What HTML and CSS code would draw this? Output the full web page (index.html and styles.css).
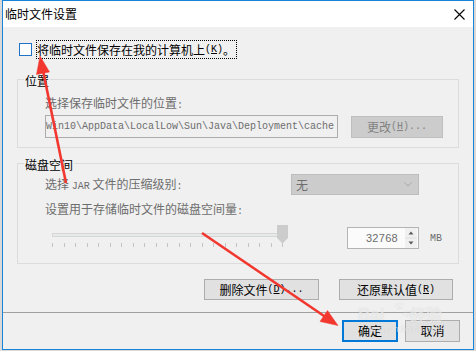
FILE: index.html
```html
<!DOCTYPE html>
<html lang="zh-CN">
<head>
<meta charset="utf-8">
<title>临时文件设置</title>
<link rel="stylesheet" href="styles.css">
</head>
<body>
<div class="win">
  <div class="titlebar">
    <span class="title">临时文件设置</span>
    <svg class="close" width="11" height="11" viewBox="0 0 11 11"><path d="M0.5 0.5L10.5 10.5M10.5 0.5L0.5 10.5" stroke="#000" stroke-width="1.1" fill="none"/></svg>
  </div>
  <div class="content">
    <div class="check-row">
      <span class="checkbox"></span>
      <span class="check-label">将临时文件保存在我的计算机上<span class="m">(<u>K</u>)</span>。</span>
    </div>

    <div class="group g1">
      <div class="legend">位置</div>
      <div class="label dis">选择保存临时文件的位置<span class="m">:</span></div>
      <div class="path-row">
        <div class="path"><span>Win10\AppData\LocalLow\Sun\Java\Deployment\cache</span></div>
        <div class="btn disabled">更改<span class="m">(<u>H</u>)...</span></div>
      </div>
    </div>

    <div class="group g2">
      <div class="legend">磁盘空间</div>
      <div class="combo-row">
        <span class="label-inline dis">选择 <span class="m">JAR</span> 文件的压缩级别<span class="m">:</span></span>
        <div class="combo">
          <span>无</span>
          <svg width="8" height="5" viewBox="0 0 8 5"><path d="M0.5 0.5L4 4L7.5 0.5" stroke="#a9a9a9" fill="none"/></svg>
        </div>
      </div>
      <div class="label dis l2">设置用于存储临时文件的磁盘空间量<span class="m">:</span></div>
      <div class="slider-row">
        <svg class="slider" width="237" height="23" viewBox="0 0 237 23">
          <rect x="0.5" y="8.5" width="232" height="3" fill="#e7eaea" stroke="#d6d6d6"/>
          <path d="M0.5 18V22M12.5 18V22M23.5 18V22M35.5 18V22M46.5 18V22M58.5 18V22M69.5 18V22M81.5 18V22M92.5 18V22M104.5 18V22M115.5 18V22M127.5 18V22M138.5 18V22M150.5 18V22M161.5 18V22M173.5 18V22M184.5 18V22M196.5 18V22M207.5 18V22M219.5 18V22M230.5 18V22" stroke="#c4c4c4" stroke-width="1"/>
          <path d="M225 0H236V13L230.5 18.5L225 13Z" fill="#cccccc"/>
        </svg>
        <div class="spin">
          <span class="spin-val">32768</span>
          <svg class="spin-btns" width="12" height="20" viewBox="0 0 12 20">
            <rect x="0" y="0" width="12" height="9.5" fill="#f0f0f0"/>
            <rect x="0" y="10.5" width="12" height="9.5" fill="#f0f0f0"/>
            <path d="M0 10H12" stroke="#d9d9d9"/>
            <path d="M3.5 6.5H8.5L6 3.5Z" fill="#5a5a5a"/>
            <path d="M3.5 13.5H8.5L6 16.5Z" fill="#5a5a5a"/>
          </svg>
        </div>
        <span class="mb">MB</span>
      </div>
    </div>

    <div class="btn-row">
      <div class="btn b-del">删除文件<span class="m">(<u>D</u>)...</span></div>
      <div class="btn b-reset">还原默认值<span class="m">(<u>R</u>)</span></div>
    </div>

    <div class="sep"></div>

    <div class="ok-row">
      <div class="btn b-ok">确定</div>
      <div class="btn b-cancel">取消</div>
    </div>
  </div>
</div>

<div class="watermark"><span class="wm-bai">Bai</span><span class="wm-paw">&#x1F43E;</span><span class="wm-jy">经验</span><span class="wm-url">jingyan.baidu.com</span></div>

<svg class="arrows" width="476" height="351" viewBox="0 0 476 351">
  <g fill="#f2372f" stroke="#f2372f">
    <path d="M66 183L42.5 68" stroke-width="2.6" fill="none"/>
    <path d="M40 56L49.5 72L36.5 74.5Z" stroke-width="0.5"/>
    <path d="M202 233L327 318" stroke-width="2.6" fill="none"/>
    <path d="M338 325.5L320 321.5L327.5 310.5Z" stroke-width="0.5"/>
  </g>
</svg>
</body>
</html>
```
FILE: styles.css
```css
html, body {
  margin: 0;
  padding: 0;
}

body {
  width: 476px;
  height: 351px;
  overflow: hidden;
  position: relative;
  background: #d9d9d9;
  font-family: "Noto Sans CJK SC", "Noto Sans", sans-serif;
  font-size: 12px;
  color: #000;
}

.m {
  font-family: "Liberation Mono", monospace;
  font-size: 10px;
}

.win {
  margin-left: 2px;
  width: 472px;
  height: 350px;
  box-sizing: border-box;
  border: 1px solid #1883d7;
  background: #f0f0f0;
  display: flex;
  flex-direction: column;
}

.titlebar {
  height: 26px;
  flex-shrink: 0;
  background: #fff;
  display: flex;
  align-items: center;
  justify-content: space-between;
  padding: 0 8px 0 2px;
}

.title {
  font-size: 12px;
  line-height: 16px;
}

.close {
  display: block;
}

.content {
  display: flex;
  flex-direction: column;
  flex: 1;
}

.check-row {
  display: flex;
  align-items: center;
  height: 19px;
  margin: 13px 0 0 16px;
}

.checkbox {
  width: 13px;
  height: 13px;
  box-sizing: border-box;
  border: 1px solid #1e73c8;
  background: #fff;
}

.check-label {
  margin-left: 4px;
  height: 19px;
  box-sizing: border-box;
  border: 1px dotted #000;
  padding: 0 1px 0 0;
  display: flex;
  align-items: center;
  line-height: 17px;
}

.group {
  width: 442px;
  margin-left: 14px;
  box-sizing: border-box;
  border: 1px solid #dcdcdc;
  display: flex;
  flex-direction: column;
}

.g1 {
  margin-top: 20px;
  padding-bottom: 9px;
}

.g2 {
  margin-top: 15px;
  padding-bottom: 14px;
}

.legend {
  align-self: flex-start;
  margin: -6px 0 0 6px;
  padding: 0 1px;
  line-height: 14px;
  height: 14px;
  background: #f0f0f0;
}

.dis {
  color: #6d6d6d;
}

.label {
  margin: 8px 0 0 27px;
  line-height: 14px;
  height: 14px;
}

.label.l2 {
  margin-top: 7px;
}

.path-row {
  display: flex;
  align-items: flex-start;
  margin: 5px 0 0 27px;
}

.path {
  width: 293px;
  height: 23px;
  box-sizing: border-box;
  border: 1px solid #acacac;
  background: #f0f0f0;
  display: flex;
  justify-content: flex-end;
  align-items: center;
  overflow: hidden;
  padding-right: 3px;
  font-family: "Liberation Mono", monospace;
  font-size: 10px;
  color: #6d6d6d;
}

.path span {
  flex-shrink: 0;
  white-space: pre;
}

.btn {
  height: 21px;
  box-sizing: border-box;
  border: 1px solid #adadad;
  background: #e1e1e1;
  display: flex;
  align-items: center;
  justify-content: center;
  line-height: 14px;
  white-space: nowrap;
}

.btn.disabled {
  width: 92px;
  height: 22px;
  margin: 1px 0 0 13px;
  background: #cccccc;
  border-color: #bfbfbf;
  color: #838383;
}

.combo-row {
  display: flex;
  align-items: center;
  justify-content: space-between;
  height: 21px;
  margin: 2px 39px 0 27px;
}

.label-inline {
  line-height: 14px;
  padding-top: 2px;
}

.combo {
  width: 128px;
  height: 21px;
  box-sizing: border-box;
  border: 1px solid #bdbdbd;
  background: #cccccc;
  display: flex;
  align-items: center;
  justify-content: space-between;
  padding: 0 6px 0 4px;
  color: #6d6d6d;
}

.combo svg {
  display: block;
}

.slider-row {
  display: flex;
  align-items: flex-start;
  margin: 9px 0 0 34px;
}

.slider {
  display: block;
}

.spin {
  width: 72px;
  height: 22px;
  margin: 2px 0 0 58px;
  box-sizing: border-box;
  border: 1px solid #b4b4b4;
  background: #fbfbfb;
  display: flex;
  align-items: center;
  justify-content: flex-end;
  padding-right: 1px;
}

.spin-val {
  font-family: "Liberation Sans", sans-serif;
  font-size: 11px;
  color: #6d6d6d;
  margin-right: 7px;
  letter-spacing: 0.3px;
}

.spin-btns {
  display: block;
}

.mb {
  margin: 9px 0 0 11px;
  font-family: "Liberation Mono", monospace;
  font-size: 10px;
  line-height: 10px;
  color: #6d6d6d;
}

.btn-row {
  display: flex;
  justify-content: flex-end;
  gap: 20px;
  margin: 15px 20px 0 0;
}

.b-del {
  width: 115px;
}

.b-reset {
  width: 114px;
}

.sep {
  height: 1px;
  background: #a0a0a0;
  margin-top: 12px;
}

.ok-row {
  display: flex;
  justify-content: flex-end;
  gap: 7px;
  margin: 7px 13px 0 0;
}

.b-ok {
  width: 56px;
  height: 22px;
  border: 2px solid #0078d7;
}

.b-cancel {
  width: 55px;
  height: 22px;
}

.watermark {
  position: absolute;
  left: 358px;
  top: 294px;
  width: 100px;
  height: 42px;
  color: rgba(255, 255, 255, 0.55);
  text-shadow: 0 0 1px rgba(150, 150, 150, 0.35);
  pointer-events: none;
}

.wm-bai {
  position: absolute;
  left: 0;
  top: 12px;
  font-family: "Liberation Sans", sans-serif;
  font-weight: bold;
  font-size: 17px;
  line-height: 17px;
}

.wm-paw {
  position: absolute;
  left: 35px;
  top: 4px;
  font-size: 16px;
  line-height: 20px;
  opacity: 0.35;
  filter: grayscale(1) brightness(2);
}

.wm-jy {
  position: absolute;
  left: 52px;
  top: 12px;
  font-size: 16px;
  line-height: 17px;
  font-weight: bold;
}

.wm-url {
  position: absolute;
  left: 12px;
  top: 30px;
  font-family: "Liberation Sans", sans-serif;
  font-size: 9px;
  line-height: 10px;
}

.arrows {
  position: absolute;
  left: 0;
  top: 0;
  pointer-events: none;
}
```
